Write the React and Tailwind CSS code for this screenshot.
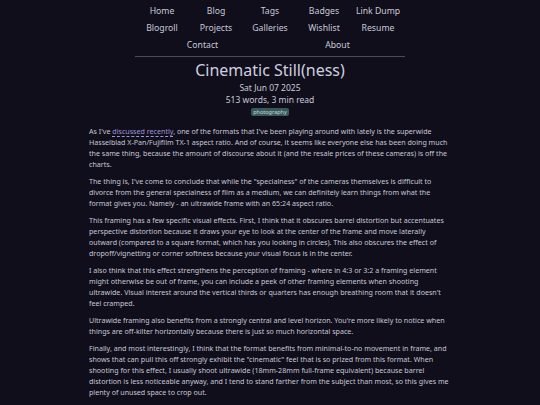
import React from "react";

const row1 = ["Home", "Blog", "Tags", "Badges", "Link Dump"];
const row2 = ["Blogroll", "Projects", "Galleries", "Wishlist", "Resume"];

export default function App() {
  return (
    <div className="min-h-[405px] w-full bg-[#0f0e1a] text-[#c9c8d9]" style={{ fontFamily: '"Noto Sans", "Open Sans", sans-serif' }}>
      <nav className="mx-auto w-[270px] pt-[3px] text-[8.7px] leading-[17px]">
        <div className="grid grid-cols-5 text-center">
          {row1.map((x) => (
            <span key={x}>{x}</span>
          ))}
        </div>
        <div className="grid grid-cols-5 text-center">
          {row2.map((x) => (
            <span key={x}>{x}</span>
          ))}
        </div>
        <div className="grid grid-cols-2 text-center">
          <span>Contact</span>
          <span>About</span>
        </div>
        <div className="mt-[2px] h-px bg-[#4b4b5c]" />
      </nav>
      <header className="mt-[2px] flex flex-col items-center">
        <h1 className="text-[16px] leading-[22px] text-[#d0cfe0]">Cinematic Still(ness)</h1>
        <div className="mt-[1px] text-[8.5px] leading-[12px]">Sat Jun 07 2025</div>
        <div className="text-[8.5px] leading-[12px]">513 words, 3 min read</div>
        <span className="mt-[2px] rounded-[2px] bg-[#37585a] px-[2px] text-[5.5px] leading-[8px] text-[#c9d6d8]">photography</span>
      </header>
      <article className="mx-auto mt-[10px] w-[362px] text-[7.12px] leading-[11px]">
        <p className="mb-[6px]">
          As I've{" "}
          <a className="text-[#a195d6] underline decoration-dashed decoration-[0.5px] underline-offset-[1.5px]">discussed recently</a>, one of the formats that I've been playing around with lately is the superwide Hasselblad X-Pan/Fujifilm TX-1 aspect ratio. And of course, it seems like everyone else has been doing much the same thing, because the amount of discourse about it (and the resale prices of these cameras) is off the charts.
        </p>
        <p className="mb-[6px]">
          The thing is, I've come to conclude that while the "specialness" of the cameras themselves is difficult to divorce from the general specialness of film as a medium, we can definitely learn things from what the format gives you. Namely - an ultrawide frame with an 65:24 aspect ratio.
        </p>
        <p className="mb-[6px]">
          This framing has a few specific visual effects. First, I think that it obscures barrel distortion but accentuates perspective distortion because it draws your eye to look at the center of the frame and move laterally outward (compared to a square format, which has you looking in circles). This also obscures the effect of dropoff/vignetting or corner softness because your visual focus is in the center.
        </p>
        <p className="mb-[6px]">
          I also think that this effect strengthens the perception of framing - where in 4:3 or 3:2 a framing element might otherwise be out of frame, you can include a peek of other framing elements when shooting ultrawide. Visual interest around the vertical thirds or quarters has enough breathing room that it doesn't feel cramped.
        </p>
        <p className="mb-[6px]">
          Ultrawide framing also benefits from a strongly central and level horizon. You're more likely to notice when things are off-kilter horizontally because there is just so much horizontal space.
        </p>
        <p className="mb-[6px]">
          Finally, and most interestingly, I think that the format benefits from minimal-to-no movement in frame, and shows that can pull this off strongly exhibit the "cinematic" feel that is so prized from this format. When shooting for this effect, I usually shoot ultrawide (18mm-28mm full-frame equivalent) because barrel distortion is less noticeable anyway, and I tend to stand farther from the subject than most, so this gives me plenty of unused space to crop out.
        </p>
        <p className="mb-[6px]">
          The apparent crop factor of 65:24 when cropping from full frame is about 0.55 - so everything is a little less than half as wide as it would be otherwise.
        </p>
      </article>
    </div>
  );
}
